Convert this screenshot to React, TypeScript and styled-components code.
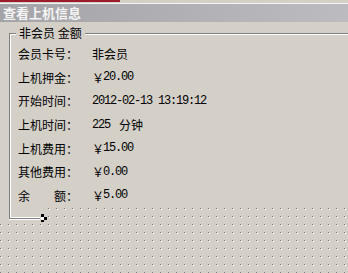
import React from 'react';
import styled, { createGlobalStyle } from 'styled-components';

const GlobalStyle = createGlobalStyle`
  html, body { margin: 0; padding: 0; background: #d4d0c8; }
  * { box-sizing: border-box; }
`;

const rows: { label: string; value: string; cjk?: boolean }[] = [
  { label: '会员卡号：', value: '非会员', cjk: true },
  { label: '上机押金：', value: '20.00' },
  { label: '开始时间：', value: '2012-02-13 13:19:12' },
  { label: '上机时间：', value: '225' },
  { label: '上机费用：', value: '15.00' },
  { label: '其他费用：', value: '0.00' },
  { label: '余　　额：', value: '5.00' },
];

const Window = styled.div`
  width: 348px;
  height: 273px;
  overflow: hidden;
  display: flex;
  flex-direction: column;
  background-color: #d4d0c8;
  background-image: radial-gradient(circle at 0.5px 0.5px, #7c7c7c 0.6px, transparent 0.9px),
    radial-gradient(circle at 1.5px 1.5px, #ffffff 0.6px, transparent 0.9px);
  background-size: 8px 8px;
  font-family: "Noto Sans CJK SC", "Noto Sans", sans-serif;
  font-size: 12px;
  color: #000;
`;

const TopStrip = styled.div`
  height: 4px;
  background: #d4d0c8;
  border-bottom: 1px solid #f4f4f4;
`;

const RedMark = styled.div`
  width: 120px;
  height: 2px;
  background: #9c1c2c;
`;

const TitleBar = styled.div`
  height: 18px;
  padding-left: 3px;
  display: flex;
  align-items: center;
  background: linear-gradient(to right, #a4a4a8, #b0b0b4 50%, #bcbcc0);
  color: #f4f4f4;
  font-weight: 700;
  font-size: 13px;
  line-height: 18px;
`;

const Panel = styled.div`
  height: 185px;
  background: #d4d0c8;
  padding: 11px 0 0 9px;
  display: flex;
`;

const GroupBox = styled.div`
  position: relative;
  flex: 1;
  border-top: 1px solid #808080;
  border-left: 1px solid #808080;
`;

const GroupInner = styled.div`
  height: 100%;
  border-top: 1px solid #ffffff;
  border-left: 1px solid #ffffff;
  padding: 7px 0 0 7px;
  display: flex;
  flex-direction: column;
`;

const Legend = styled.span`
  position: absolute;
  left: 6px;
  top: -9px;
  padding: 0 3px;
  background: #d4d0c8;
  line-height: 16px;
  white-space: pre;
`;

const Row = styled.div`
  height: 24px;
  display: flex;
  align-items: center;
`;

const Label = styled.span`
  width: 74px;
  white-space: pre;
`;

const Value = styled.span<{ $cjk?: boolean }>`
  display: flex;
  align-items: center;
  white-space: pre;
  font-family: ${(p) => (p.$cjk ? '"Noto Sans CJK SC", sans-serif' : '"Liberation Mono", monospace')};
  font-size: 12px;
  letter-spacing: ${(p) => (p.$cjk ? '0' : '-1.2px')};
`;

const Yen = styled.span`
  font-family: "Noto Sans CJK SC", sans-serif;
  font-size: 12px;
  width: 11px;
  letter-spacing: 0;
`;

const Unit = styled.span`
  font-family: "Noto Sans CJK SC", sans-serif;
  font-size: 12px;
  letter-spacing: 0;
  margin-left: 9px;
`;

const BottomArea = styled.div`
  display: flex;
`;

const Stub = styled.div`
  position: relative;
  width: 48px;
  height: 16px;
  background: #d4d0c8;
  padding-left: 9px;
`;

const StubCorner = styled.div`
  width: 31px;
  height: 12px;
  border-left: 1px solid #808080;
  border-bottom: 1px solid #808080;
  box-shadow: inset 1px -1px 0 #ffffff, 0 1px 0 #ffffff;
`;

const Handle = styled.svg`
  position: absolute;
  left: 40px;
  top: 7px;
`;

const App: React.FC = () => {
  return (
    <Window>
      <GlobalStyle />
      <TopStrip>
        <RedMark />
      </TopStrip>
      <TitleBar>查看上机信息</TitleBar>
      <Panel>
        <GroupBox>
          <Legend>非会员 金额</Legend>
          <GroupInner>
            {rows.map((r, i) => (
              <Row key={i}>
                <Label>{r.label}</Label>
                {r.cjk ? (
                  <Value $cjk>{r.value}</Value>
                ) : i === 2 ? (
                  <Value>{r.value}</Value>
                ) : i === 3 ? (
                  <Value>
                    {r.value}
                    <Unit>分钟</Unit>
                  </Value>
                ) : (
                  <Value>
                    <Yen>￥</Yen>
                    {r.value}
                  </Value>
                )}
              </Row>
            ))}
          </GroupInner>
        </GroupBox>
      </Panel>
      <BottomArea>
        <Stub>
          <StubCorner />
          <Handle width="8" height="9" viewBox="0 0 8 9">
            <rect x="1" y="0" width="3" height="3" fill="#000" />
            <rect x="4" y="3" width="3" height="3" fill="#000" />
            <rect x="1" y="3" width="3" height="3" fill="#fff" />
            <rect x="1" y="6" width="3" height="2" fill="#000" />
          </Handle>
        </Stub>
      </BottomArea>
    </Window>
  );
};

export default App;
